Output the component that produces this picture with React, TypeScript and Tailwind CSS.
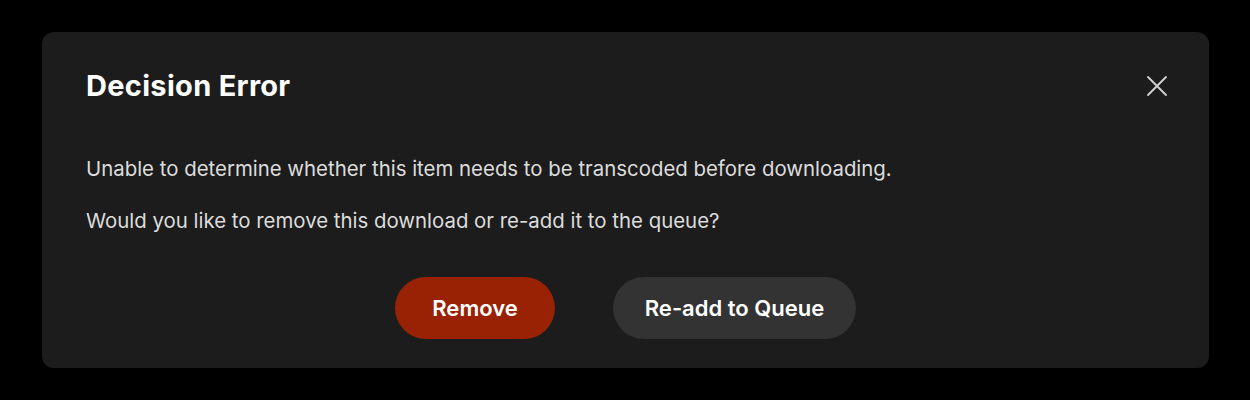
export default function App() {
  return (
    <div className="h-[400px] w-[1250px] bg-black pt-[32px] pl-[42px]" style={{ fontFamily: "Inter, 'Noto Sans', sans-serif" }}>
      <div className="w-[1167px] h-[336px] rounded-[12px] bg-[#1c1c1c] pl-[44px] pr-[40px] pt-[34px]">
        <div className="flex items-center justify-between h-[40px]">
          <h1 className="text-[29px] font-bold text-white tracking-[0.3px]">Decision Error</h1>
          <button className="text-[#d4d4d4] w-[24px] h-[24px] flex items-center justify-center">
            <svg width="22" height="22" viewBox="0 0 22 22" fill="none" stroke="currentColor" strokeWidth="1.8" strokeLinecap="round">
              <path d="M2 2 L20 20 M20 2 L2 20" />
            </svg>
          </button>
        </div>
        <p className="mt-[49px] text-[20.4px] leading-[28px] text-[#dcdcdc]">
          Unable to determine whether this item needs to be transcoded before downloading.
        </p>
        <p className="mt-[24px] text-[20.4px] leading-[28px] text-[#dcdcdc]">
          Would you like to remove this download or re-add it to the queue?
        </p>
        <div className="mt-[42px] flex justify-center gap-[58px] pr-[4px]">
          <button className="h-[62px] w-[160px] rounded-full bg-[#992205] text-[22px] font-semibold text-white">Remove</button>
          <button className="h-[62px] w-[243px] rounded-full bg-[#333333] text-[22px] font-semibold text-white">Re-add to Queue</button>
        </div>
      </div>
    </div>
  );
}
